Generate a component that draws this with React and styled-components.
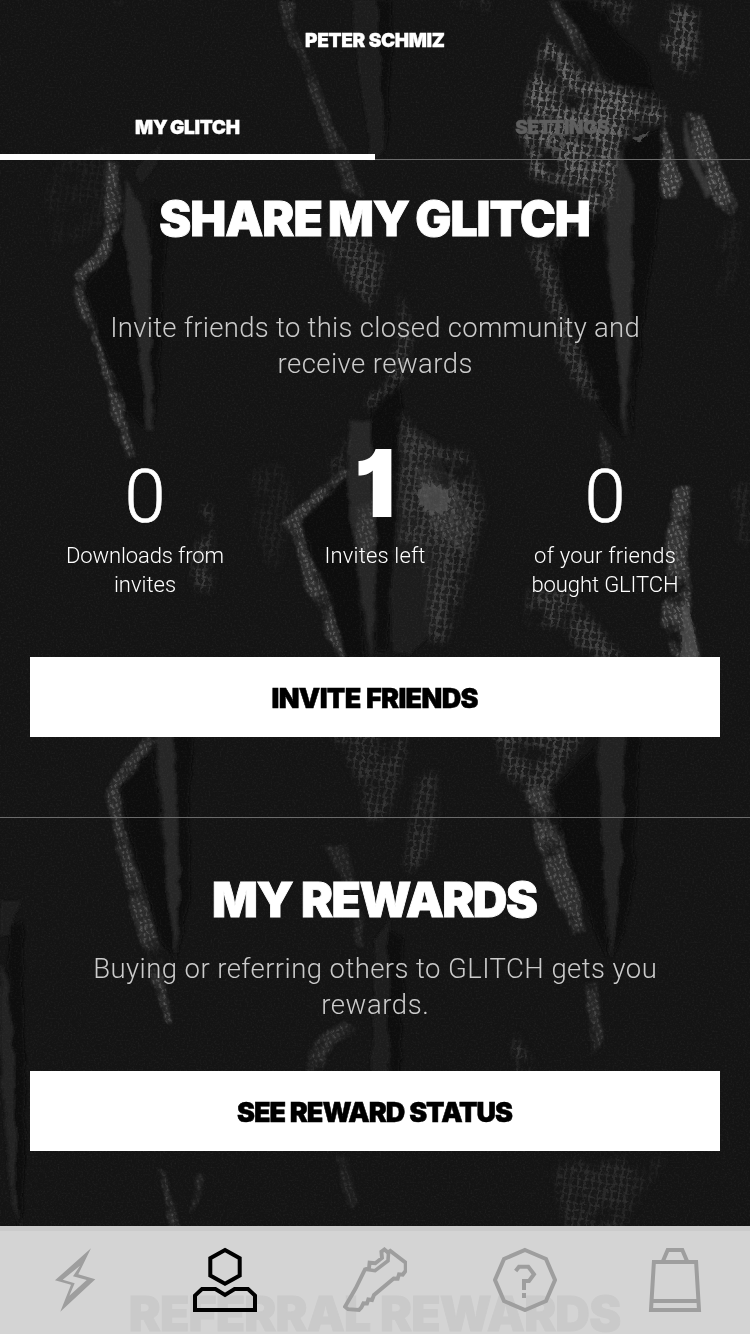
import React from 'react'
import styled, { createGlobalStyle } from 'styled-components'

const GlobalStyle = createGlobalStyle`
  * {
    box-sizing: border-box;
  }

  body {
    margin: 0;
    background: #151515;
    font-family: Roboto, 'Liberation Sans', sans-serif;
  }
`

const Screen = styled.div`
  position: relative;
  width: 750px;
  height: 1334px;
  overflow: hidden;
  background: #141414;
  color: #fff;
`

const Backdrop = styled.svg`
  position: absolute;
  inset: 0;
`

const Content = styled.div`
  position: relative;
  z-index: 2;
  display: flex;
  flex-direction: column;
`

const Header = styled.header`
  height: 80px;
  padding-top: 2px;
  display: flex;
  align-items: center;
  justify-content: center;
`

const HeavyText = styled.span`
  font-family: Inter, 'Liberation Sans', sans-serif;
  font-weight: 900;
  font-size: ${(p) => p.$size}px;
  line-height: 0.8;
  letter-spacing: ${(p) => p.$spacing}px;
  word-spacing: ${(p) => (p.$tight ? -0.05 : 0.02)}em;
  margin-right: ${(p) => -p.$spacing}px;
  white-space: nowrap;
  -webkit-text-stroke: 0.018em currentColor;
`

const Tabs = styled.nav`
  display: grid;
  grid-template-columns: 1fr 1fr;
  height: 80px;
`

const Tab = styled.a`
  display: flex;
  justify-content: center;
  padding-top: 40px;
  color: ${(p) => (p.$active ? '#fff' : '#5f5f5f')};
  border-bottom: ${(p) => (p.$active ? '6px solid #fff' : '1px solid #6b6b6b')};
`

const Section = styled.section`
  display: flex;
  flex-direction: column;
  align-items: center;
  height: ${(p) => p.$height}px;
  padding: ${(p) => p.$top}px 30px 0;
  border-bottom: ${(p) => (p.$divided ? '1px solid #6b6b6b' : '0')};
`

const Title = styled.h2`
  margin: 0;
  height: 40px;
  display: flex;
  align-items: center;
  color: ${(p) => (p.$ghost ? '#cacaca' : '#fff')};
`

const Lead = styled.p`
  margin: ${(p) => p.$gap}px 0 0;
  height: 72px;
  display: flex;
  flex-direction: column;
  align-items: center;
  font-size: 27.5px;
  font-weight: 300;
  line-height: 36px;
  color: #cbcbcb;
`

const Line = styled.span`
  letter-spacing: ${(p) => p.$spacing}px;
  margin-right: ${(p) => -p.$spacing}px;
  white-space: nowrap;
`

const Stats = styled.div`
  display: grid;
  grid-template-columns: repeat(3, 230px);
  height: 160px;
  margin-top: 58px;
`

const Stat = styled.div`
  display: flex;
  flex-direction: column;
  align-items: center;
`

const Figure = styled.div`
  height: 101px;
  display: flex;
  align-items: flex-end;
  padding-bottom: ${(p) => (p.$strong ? 11 : 7)}px;
  font-family: ${(p) => (p.$strong ? 'Inter' : 'Roboto')}, sans-serif;
  font-weight: ${(p) => (p.$strong ? 900 : 300)};
  font-size: ${(p) => (p.$strong ? 94 : 74)}px;
  font-feature-settings: 'cv01';
  line-height: 1;
  -webkit-text-stroke: ${(p) => (p.$strong ? 0 : 0.7)}px #fff;
`

const Label = styled.div`
  display: flex;
  flex-direction: column;
  align-items: center;
  font-size: 22px;
  font-weight: 300;
  line-height: 29px;
`

const Button = styled.button`
  width: 690px;
  height: 80px;
  flex: none;
  margin-top: ${(p) => p.$gap}px;
  padding: 3px 0 0;
  display: flex;
  align-items: center;
  justify-content: center;
  border: 0;
  background: #fff;
  color: #000;
`

const BarSurface = styled.div`
  position: absolute;
  z-index: 1;
  left: 0;
  right: 0;
  bottom: 0;
  height: 108px;
  background: #d4d4d4;
  border-top: 5px solid #cbcbcb;
`

const BottomBar = styled.nav`
  position: absolute;
  z-index: 3;
  left: 0;
  right: 0;
  bottom: 0;
  height: 108px;
  display: grid;
  grid-template-columns: repeat(5, 1fr);
`

const BarItem = styled.a`
  display: flex;
  justify-content: center;
  padding-top: 20px;
  color: ${(p) => (p.$active ? '#000' : '#9e9e9e')};
`

const DARK = '#0e0e0e'

// narrow folds and the gaps between them
const folds = [
  ['352,0 376,0 382,70 384,150 372,165 360,80', '#1f1f1f'],
  ['376,0 390,0 392,60 386,160 382,70', DARK],
  ['126,178 141,205 150,250 150,330 153,430 146,430 138,350 128,280 124,235', '#262626'],
  ['84,285 112,252 121,215 128,260 134,310 142,370 146,430 126,410 98,330', DARK],
  ['151,200 168,205 163,300 160,370 154,430 150,330', '#101010'],
  ['133,170 155,150 163,138 158,162 142,184', '#1f1f1f'],
  ['605,150 622,152 634,190 633,250 630,350 625,440 616,340 608,250 603,200', '#2c2c2c'],
  ['622,145 662,130 660,180 655,235 645,310 632,440 632,250 634,185', DARK],
  ['552,246 600,203 607,260 617,345 622,440 597,400 570,320', DARK],
  ['559,0 600,0 616,30 645,60 662,110 620,90 585,45', DARK],
  ['682,115 687,125 712,195 705,200 690,165', '#343434'],
  ['300,520 347,475 352,530 360,600 364,660 344,655 322,590', DARK],
  ['347,470 350,420 372,420 374,500 376,560 372,660 362,600 352,530', '#252525'],
  ['370,420 402,420 397,500 390,590 386,650 376,650 376,560', DARK],
  ['370,408 400,375 402,420 370,420', DARK],
  ['400,425 435,440 462,510 445,620 410,655 392,650 391,590 398,500', '#1d1d1d'],
  ['120,790 152,750 159,820 168,890 177,960 160,940 138,860', DARK],
  ['155,730 173,730 178,830 180,900 175,960 165,860', '#252525'],
  ['174,730 192,730 188,900 178,960 180,850', '#101010'],
  ['550,790 597,745 602,850 608,960 590,920 565,850', DARK],
  ['598,730 625,730 622,850 613,960 604,880', '#232323'],
  ['626,730 640,730 632,900 614,960 622,850', '#101010'],
  ['375,940 388,920 390,1000 388,1080 372,1080', '#1d1d1d'],
  ['388,930 403,940 400,1080 390,1080', DARK],
  ['0,958 9,985 14,1080 22,1240 12,1200 0,1050', '#242424'],
  ['8,930 22,920 25,1090 24,1190 18,1240 14,1080', DARK],
  ['0,900 20,900 10,935 0,935', '#1b1b1b'],
]

// where the knit catches light: [points, brightness, coarse knit]
const knits = [
  ['278,0 297,0 292,22 325,100 350,160 364,195 345,190 318,110 288,40', 0.5],
  ['108,160 117,165 121,215 113,250 84,280 82,290 98,335 125,410 134,458 127,458 116,420 96,345 71,288 76,277 106,240', 0.85],
  ['60,160 110,145 106,230 55,250 45,200', 0.1, true],
  ['322,238 390,238 382,275 372,310 350,285 335,260', 0.5, true],
  ['402,295 413,340 408,375 372,410 362,405 392,365', 0.5, true],
  ['546,34 575,65 605,85 655,95 670,122 640,122 622,140 612,190 595,212 575,190 535,178 518,130 530,95', 1, true],
  ['550,0 560,0 585,42 602,85 590,75 568,35', 0.7],
  ['590,0 635,0 622,30 608,22', 0.5, true],
  ['672,5 698,10 697,60 688,75 662,52', 0.75, true],
  ['686,112 701,115 715,150 737,205 730,218 710,195 696,150', 1],
  ['665,125 672,150 683,180 678,195 662,195 660,160', 1],
  ['455,0 488,0 486,10 465,6', 0.5, true],
  ['112,0 120,0 119,10', 0.5],
  ['528,250 575,225 610,180 618,200 598,215 553,247 562,295 580,345 598,395 592,408 568,370 548,305', 0.5, true],
  ['722,225 742,220 735,280 717,305', 0.13, true],
  ['283,520 300,507 343,468 350,472 303,520 306,545 330,600 347,657 336,657 312,595 297,545', 0.8],
  ['335,440 350,440 340,475 325,480', 0.3, true],
  ['250,475 280,460 295,500 278,570 265,560 255,520', 0.13, true],
  ['355,510 374,500 378,540 362,560', 0.6],
  ['402,410 425,440 468,455 485,510 472,560 448,640 430,640 425,570 400,540 400,480', 0.42, true],
  ['415,470 450,475 475,520 465,555 430,522', 0.55],
  ['205,505 212,500 211,590 198,590 193,560', 0.45, true],
  ['602,430 612,445 610,470 600,468', 0.4],
  ['676,490 690,485 688,560 693,620 702,665 676,665 662,625 668,550', 0.9],
  ['528,590 570,590 625,660 590,660 565,630 525,622', 0.5, true],
  ['732,485 750,480 750,550 738,540', 0.18, true],
  ['144,738 156,742 121,790 128,840 155,930 172,1025 166,1025 145,955 118,850 105,790', 0.7],
  ['330,730 410,730 400,780 388,815 372,822 355,770', 0.35, true],
  ['495,730 590,730 550,788 558,845 545,850 525,790 500,770', 0.5, true],
  ['525,790 548,788 562,840 580,895 585,935 570,935 545,865', 0.75],
  ['422,775 438,772 434,848 410,875 405,860', 0.35, true],
  ['325,845 345,843 362,910 365,950 358,945 344,880', 0.35],
  ['586,985 596,980 604,1040 590,1055', 0.55],
  ['345,1020 356,1030 326,1056 320,1078 306,1078 308,1050', 0.5],
  ['515,1030 538,1078 517,1078', 0.5, true],
  ['555,1160 665,1158 645,1190 615,1235 565,1235', 0.25, true],
  ['157,1168 164,1172 180,1230 170,1230', 0.6],
  ['198,1172 203,1174 199,1200 187,1212', 0.5],
  ['336,1155 346,1158 358,1205 350,1210', 0.3],
]

function KnitMask({ id, coarse }) {
  return (
    <mask id={id} maskUnits="userSpaceOnUse" x="0" y="0" width="750" height="1334">
      <g filter={coarse ? 'url(#patchyWide)' : 'url(#patchy)'}>
        {knits
          .filter((knit) => !!knit[2] === coarse)
          .map(([points, light]) => (
            <polygon key={points} points={points} fill="#fff" opacity={light} />
          ))}
      </g>
    </mask>
  )
}

function PatchyFilter({ id, blur }) {
  return (
    <filter id={id} filterUnits="userSpaceOnUse" x="0" y="0" width="750" height="1334">
      <feTurbulence type="fractalNoise" baseFrequency=".035" numOctaves="4" seed="8" result="n" />
      <feColorMatrix in="n" values="0 0 0 0 1  0 0 0 0 1  0 0 0 0 1  3.5 0 0 0 -.8" result="light" />
      <feDisplacementMap
        in="SourceGraphic"
        in2="n"
        scale="12"
        xChannelSelector="R"
        yChannelSelector="G"
        result="d"
      />
      <feGaussianBlur in="d" stdDeviation={blur} result="b" />
      <feComposite in="b" in2="light" operator="in" />
    </filter>
  )
}

function Cloth() {
  return (
    <Backdrop width="750" height="1334" viewBox="0 0 750 1334" aria-hidden="true">
      <defs>
        <pattern id="fine" width="5" height="6" patternUnits="userSpaceOnUse" patternTransform="rotate(-18)">
          <rect width="5" height="6" fill="#363636" />
          <ellipse cx="2.500" cy="3" rx="1" ry="2" fill="#747474" />
        </pattern>
        <pattern id="coarse" width="7" height="8" patternUnits="userSpaceOnUse" patternTransform="rotate(8)">
          <rect width="7" height="8" fill="#222" />
          <path d="M2 1v5M1 7h4" stroke="#6c6c6c" strokeWidth="1.900" strokeLinecap="round" />
        </pattern>
        <PatchyFilter id="patchy" blur={1.8} />
        <PatchyFilter id="patchyWide" blur={3.5} />
        <filter id="rough" filterUnits="userSpaceOnUse" x="0" y="0" width="750" height="1334">
          <feTurbulence type="fractalNoise" baseFrequency=".15" numOctaves="2" seed="4" result="n" />
          <feDisplacementMap in="SourceGraphic" in2="n" scale="6" xChannelSelector="R" yChannelSelector="G" result="d" />
          <feGaussianBlur in="d" stdDeviation=".45" />
        </filter>
        <filter id="soft" filterUnits="userSpaceOnUse" x="0" y="0" width="750" height="1334">
          <feTurbulence type="fractalNoise" baseFrequency=".04" numOctaves="3" seed="3" result="n" />
          <feDisplacementMap in="SourceGraphic" in2="n" scale="8" xChannelSelector="R" yChannelSelector="G" result="d" />
          <feGaussianBlur in="d" stdDeviation="1.500" />
        </filter>
        <filter id="grain" x="0" y="0" width="100%" height="100%">
          <feTurbulence type="fractalNoise" baseFrequency=".55" numOctaves="2" seed="5" />
          <feColorMatrix values="0 0 0 0 1  0 0 0 0 1  0 0 0 0 1  .7 .7 0 0 -.62" />
        </filter>
        <KnitMask id="fineMask" coarse={false} />
        <KnitMask id="coarseMask" coarse />
      </defs>
      <g filter="url(#soft)">
        {folds.map(([points, fill]) => (
          <polygon key={points} points={points} fill={fill} />
        ))}
      </g>
      <g mask="url(#coarseMask)">
        <rect width="750" height="1334" fill="url(#coarse)" filter="url(#rough)" />
      </g>
      <g mask="url(#fineMask)">
        <rect width="750" height="1334" fill="url(#fine)" filter="url(#rough)" />
      </g>
      <g filter="url(#rough)">
        <path
          d="M416 490l6-2 2-6 5 5 3-6 4 6 6-3 1 6 7-1-3 6 5 4-5 4 3 7-7 0-2 5-5-4-5 5-3-6-6 2 1-6-6-1 3-5z"
          fill="#555"
          opacity=".7"
        />
        <path d="M684 600l8 20 7 40h-18z" fill="#555" opacity=".6" />
        <circle cx="557" cy="142" r="8" fill="none" stroke="#4c4c4c" strokeWidth="2.500" />
        <path d="M632 138l18-6-10 10z" fill="#484848" />
      </g>
      <rect width="750" height="1334" filter="url(#grain)" opacity=".1" />
    </Backdrop>
  )
}

function Icon({ children }) {
  return (
    <svg width="64" height="66" viewBox="0 0 64 66" fill="none" stroke="currentColor" strokeWidth="4">
      {children}
    </svg>
  )
}

const icons = {
  glitch: (
    <path
      d="M48 2.3 12 34.3l16 4.4-10.7 27 35-32.4-17-5zM37 19.7 19.7 33.7l12 3.6-5.4 12.4L43.7 34 30 30.3z"
      fill="currentColor"
      fillRule="evenodd"
      stroke="none"
    />
  ),
  profile: (
    <>
      <path d="M32 4l14.7 8.2v17.4L32 37.8l-14.7-8.2V12.2z" />
      <path d="M2 64V49.5L9 43h13.4l9.6 6 9.6-6H55l7 6.500V64z" />
    </>
  ),
  boots: (
    <>
      <path
        d="M2 60.700 12.700 42.300 22 23.300l4-1 .6-5.600 5.700.6 6.700-5.300-.6-6.300 3-2.200 3.600 3 2.300-1.500 15.400 11.700v8l-3 4-3.700-.4-1.300 4.400-4-.2L31 49l-2 5-3.700-.5-1.300 4-3.600-.2-2 4-2.400 2.700-11-.8z"
        strokeWidth="3.900"
      />
      <path d="M22 23.300l10 1.400 13-10 .5-8" strokeWidth="3.600" />
    </>
  ),
  help: (
    <>
      <path d="M32 4l21 9 9 21-9 21-21 9-21-9-9-21 9-21z" />
      <path d="M22.700 25l3.300-4.300h9.300l5.700 7.600-5 6.700h-5v9" />
      <path d="M29 47h4v5h-4z" fill="currentColor" stroke="none" />
    </>
  ),
  bag: <path d="M10.900 16h42.200L56 64H8zM9 55h46M20 15l4.700-11h14.600L44 15" />,
}

const barItems = ['glitch', 'profile', 'boots', 'help', 'bag']

const stats = [
  { value: '0', lines: [['Downloads from', -0.12], ['invites', 0]] },
  { value: '1', lines: [['Invites left', 0.16]], strong: true },
  { value: '0', lines: [['of your friends', 0.2], ['bought GLITCH', -0.1]] },
]

export default function App() {
  return (
    <Screen>
      <GlobalStyle />
      <Cloth />
      <BarSurface />
      <Content>
        <Header>
          <HeavyText $size={19} $spacing={-0.35}>PETER SCHMIZ</HeavyText>
        </Header>
        <Tabs>
          <Tab $active>
            <HeavyText $size={19} $spacing={-0.3} $tight>MY GLITCH</HeavyText>
          </Tab>
          <Tab>
            <HeavyText $size={19} $spacing={-0.4}>SETTINGS</HeavyText>
          </Tab>
        </Tabs>

        <Section $height={658} $top={39} $divided>
          <Title>
            <HeavyText $size={48} $spacing={-1} $tight>SHARE MY GLITCH</HeavyText>
          </Title>
          <Lead $gap={71}>
            <Line $spacing={0.29}>Invite friends to this closed community and</Line>
            <Line $spacing={0.43}>receive rewards</Line>
          </Lead>
          <Stats>
            {stats.map((stat, i) => (
              <Stat key={i}>
                <Figure $strong={stat.strong}>{stat.value}</Figure>
                <Label>
                  {stat.lines.map(([text, spacing]) => (
                    <Line key={text} $spacing={spacing}>{text}</Line>
                  ))}
                </Label>
              </Stat>
            ))}
          </Stats>
          <Button $gap={57}>
            <HeavyText $size={27} $spacing={-0.65}>INVITE FRIENDS</HeavyText>
          </Button>
        </Section>

        <Section $height={414} $top={62}>
          <Title>
            <HeavyText $size={48} $spacing={-1.55}>MY REWARDS</HeavyText>
          </Title>
          <Lead $gap={31}>
            <Line $spacing={0.43}>Buying or referring others to GLITCH gets you</Line>
            <Line $spacing={0.6}>rewards.</Line>
          </Lead>
          <Button $gap={48}>
            <HeavyText $size={27} $spacing={-1.02}>SEE REWARD STATUS</HeavyText>
          </Button>
        </Section>

        <Section $height={102} $top={62}>
          <Title $ghost>
            <HeavyText $size={48} $spacing={-0.85}>REFERRAL REWARDS</HeavyText>
          </Title>
        </Section>
      </Content>
      <BottomBar>
        {barItems.map((name) => (
          <BarItem key={name} $active={name === 'profile'}>
            <Icon>{icons[name]}</Icon>
          </BarItem>
        ))}
      </BottomBar>
    </Screen>
  )
}
